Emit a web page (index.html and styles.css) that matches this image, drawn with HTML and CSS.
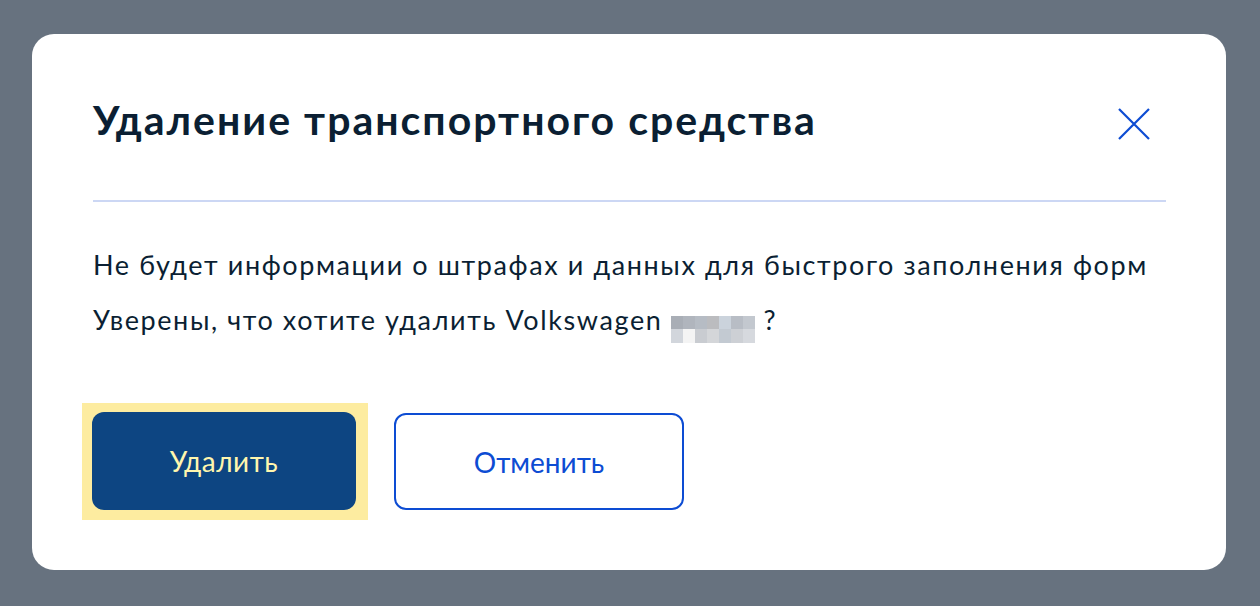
FILE: index.html
```html
<!DOCTYPE html>
<html lang="ru">
<head>
<meta charset="utf-8">
<link rel="stylesheet" href="styles.css">
</head>
<body>
<div class="overlay">
  <div class="modal">
    <div class="header">
      <h1 class="title">Удаление транспортного средства</h1>
      <button class="close" aria-label="Закрыть">
        <svg width="32" height="32" viewBox="0 0 32 32"><path d="M1 1 L31 31 M31 1 L1 31" stroke="#0d4cd3" stroke-width="2.2" fill="none"/></svg>
      </button>
    </div>
    <div class="divider"></div>
    <p class="text first">Не будет информации о штрафах и данных для быстрого заполнения форм</p>
    <p class="text second">Уверены, что хотите удалить Volkswagen <span class="blur"><span class="cells"><i class="c1"></i><i class="c2"></i><i class="c3"></i><i class="c4"></i><i class="c5"></i><i class="c6"></i><i class="c7"></i><i class="c8"></i><i class="c9"></i><i class="c10"></i><i class="c11"></i><i class="c12"></i><i class="c13"></i><i class="c14"></i></span></span> ?</p>
    <div class="actions">
      <div class="focus"><button class="btn primary">Удалить</button></div>
      <button class="btn secondary">Отменить</button>
    </div>
  </div>
</div>
</body>
</html>
```
FILE: styles.css
```css
* { box-sizing: border-box; }
html, body { margin: 0; padding: 0; }
body {
  width: 1260px;
  height: 606px;
  background: #67727f;
  font-family: Lato, "Noto Sans", sans-serif;
  overflow: hidden;
}
.overlay {
  padding: 34px 34px 0 32px;
}
.modal {
  width: 1194px;
  height: 536px;
  background: #ffffff;
  border-radius: 22px;
  padding: 0 60px 0 61px;
  display: flex;
  flex-direction: column;
}
.header {
  display: flex;
  align-items: center;
  justify-content: space-between;
  height: 166px;
  padding-top: 6px;
  padding-right: 16px;
}
.title {
  margin: 0;
  font-size: 41px;
  font-weight: 700;
  letter-spacing: 2px;
  color: #0b1f33;
  line-height: 48px;
}
.close {
  border: 0;
  background: none;
  padding: 0;
  width: 32px;
  height: 32px;
  margin-top: 8px;
  display: block;
}
.close svg { display: block; }
.divider {
  height: 2px;
  background: #ccd7f4;
}
.text {
  margin: 0;
  font-size: 27px;
  letter-spacing: 1.6px;
  line-height: 30px;
  color: #0b1f33;
}
.first { margin-top: 48px; }
.second { margin-top: 25px; }
.blur {
  display: inline-block;
  overflow: hidden;
  width: 84px;
  height: 27px;
  vertical-align: -13px;
}
.cells {
  display: grid;
  grid-template-columns: repeat(7, 12px);
  grid-template-rows: 13px 14px;
}
.cells i { display: block; }
.c1 { background: #a9aeb6; } .c2 { background: #b0b5bd; } .c3 { background: #b6bcc4; } .c4 { background: #bbbcbf; }
.c5 { background: #cbd3dc; } .c6 { background: #b8bdc5; } .c7 { background: #c3c8cf; }
.c8 { background: #d2d6dc; } .c9 { background: #f4f4f4; } .c10 { background: #c9ccd1; } .c11 { background: #d4d6d9; }
.c12 { background: #c3cad2; } .c13 { background: #cdd0d5; } .c14 { background: #d6d9de; }
.actions {
  display: flex;
  align-items: center;
  gap: 26px;
  margin-top: 60px;
  margin-left: -11px;
}
.focus {
  background: #fdeca0;
  padding: 9px 12px 10px 10px;
}
.btn {
  font-family: Lato, "Noto Sans", sans-serif;
  font-size: 28px;
  border-radius: 12px;
  height: 98px;
  cursor: pointer;
}
.primary {
  width: 264px;
  background: #0d4582;
  color: #fff6ae;
  border: 0;
  display: block;
  letter-spacing: 0.5px;
}
.secondary {
  width: 290px;
  height: 97px;
  background: #fff;
  color: #0d4cd3;
  border: 2px solid #0d4cd3;
}
```
